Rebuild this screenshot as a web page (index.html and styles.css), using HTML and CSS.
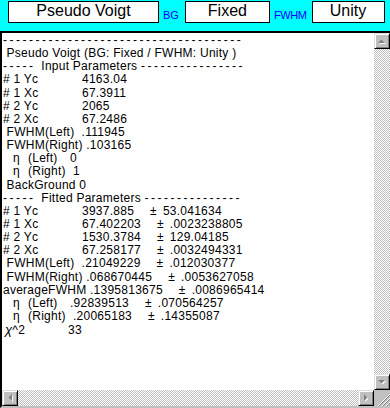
FILE: index.html
```html
<!DOCTYPE html>
<html lang="en">
<head>
  <meta charset="UTF-8">
  <title>Pseudo Voigt fit</title>
  <link rel="stylesheet" href="styles.css">
</head>
<body>
  <div class="toolbar">
    <div class="box box-model">Pseudo Voigt</div>
    <span class="tag tag-bg">BG</span>
    <div class="box box-bg">Fixed</div>
    <span class="tag tag-fwhm">FWHM</span>
    <div class="box box-fwhm">Unity</div>
  </div>
  <div class="editor">
    <div class="log">
      <div class="ln"><span class="dash">-------------------------------------</span></div>
      <div class="ln"> Pseudo Voigt (BG: Fixed / FWHM: Unity )</div>
      <div class="ln"><span class="dash">----- </span>Input Parameters <span class="dash">----------------</span></div>
      <div class="ln"><span class="k"># 1 Yc</span>4163.04</div>
      <div class="ln"><span class="k"># 1 Xc</span>67.3911</div>
      <div class="ln"><span class="k"># 2 Yc</span>2065</div>
      <div class="ln"><span class="k"># 2 Xc</span>67.2486</div>
      <div class="ln"> FWHM(Left)  .111945</div>
      <div class="ln"> FWHM(Right) .103165</div>
      <div class="ln"><span class="eta">η</span><span class="lbl-l">(Left)</span>0</div>
      <div class="ln"><span class="eta">η</span><span class="lbl-r">(Right)</span>1</div>
      <div class="ln"> BackGround 0</div>
      <div class="ln"><span class="dash">----- </span>Fitted Parameters <span class="dash">---------------</span></div>
      <div class="ln"><span class="k"># 1 Yc</span>3937.885<span class="pm">±</span>53.041634</div>
      <div class="ln"><span class="k"># 1 Xc</span>67.402203<span class="pm">±</span>.0023238805</div>
      <div class="ln"><span class="k"># 2 Yc</span>1530.3784<span class="pm">±</span>129.04185</div>
      <div class="ln"><span class="k"># 2 Xc</span>67.258177<span class="pm">±</span>.0032494331</div>
      <div class="ln"> FWHM(Left)  .21049229<span class="pm">±</span>.012030377</div>
      <div class="ln"> FWHM(Right) .068670445<span class="pm">±</span>.0053627058</div>
      <div class="ln">averageFWHM .1395813675<span class="pm">±</span>.0086965414</div>
      <div class="ln"><span class="eta">η</span><span class="lbl-l">(Left)</span>.92839513<span class="pm">±</span>.070564257</div>
      <div class="ln"><span class="eta">η</span><span class="lbl-r">(Right)</span>.20065183<span class="pm">±</span>.14355087</div>
      <div class="ln"><span class="k2"><span class="chi">χ</span>^2</span>33</div>
    </div>
    <div class="vscroll">
      <div class="sbtn">
        <svg width="9" height="7" viewBox="0 0 9 7"><polygon points="1,6 8,6 4.5,2.5" fill="#fff"/><polygon points="0,5 7,5 3.5,1.5" fill="#808080"/></svg>
      </div>
      <div class="track"></div>
      <div class="sbtn">
        <svg width="9" height="7" viewBox="0 0 9 7"><polygon points="1,2 8,2 4.5,5.5" fill="#fff"/><polygon points="0,1 7,1 3.5,4.5" fill="#808080"/></svg>
      </div>
    </div>
    <div class="hscroll">
      <div class="sbtn">
        <svg width="7" height="9" viewBox="0 0 7 9"><polygon points="6,1 6,8 2.5,4.5" fill="#fff"/><polygon points="5,0 5,7 1.5,3.5" fill="#808080"/></svg>
      </div>
      <div class="track"></div>
      <div class="sbtn">
        <svg width="7" height="9" viewBox="0 0 7 9"><polygon points="2,1 2,8 5.5,4.5" fill="#fff"/><polygon points="1,0 1,7 4.5,3.5" fill="#808080"/></svg>
      </div>
    </div>
    <div class="grip">
      <svg width="16" height="16" viewBox="0 0 16 16">
        <line x1="4" y1="16" x2="16" y2="4" stroke="#fff"/>
        <line x1="5" y1="16" x2="16" y2="5" stroke="#808080"/>
        <line x1="8" y1="16" x2="16" y2="8" stroke="#fff"/>
        <line x1="9" y1="16" x2="16" y2="9" stroke="#808080"/>
        <line x1="12" y1="16" x2="16" y2="12" stroke="#fff"/>
        <line x1="13" y1="16" x2="16" y2="13" stroke="#808080"/>
      </svg>
    </div>
  </div>
</body>
</html>
```

FILE: styles.css
```css
* { box-sizing: border-box; }
body { margin: 0; width: 390px; height: 408px; overflow: hidden; background: #00ffff; font-family: "Liberation Sans", Arial, sans-serif; color: #000; }

.toolbar { height: 31px; display: flex; align-items: flex-start; padding: 1px 0 0 8px; }
.box { height: 22px; border: 1px solid #000; background: #fff; font-size: 16px; line-height: 18px; text-align: center; }
.box-model { width: 151px; }
.box-bg { width: 85px; margin-left: 6px; }
.box-fwhm { width: 73px; margin-left: 5px; }
.tag { font-size: 11px; line-height: 12px; color: #0000ff; margin-top: 8px; }
.tag-bg { margin-left: 4px; }
.tag-fwhm { margin-left: 4px; letter-spacing: -0.4px; }

.editor { height: 377px; border-top: 2px solid #000; border-left: 2px solid #000; border-bottom: 2px solid #c0c0c0; background: #fff; display: grid; grid-template-columns: 1fr 16px; grid-template-rows: 1fr 16px; }
.log { padding: 1px 0 0 1px; font-size: 12px; line-height: 13.15px; letter-spacing: 0.25px; overflow: hidden; }
.ln { white-space: pre; height: 13.15px; }
.dash { letter-spacing: 2.5px; }
.k { display: inline-block; width: 79px; }
.k2 { display: inline-block; width: 65px; padding-left: 2px; }
.chi { font-style: italic; font-size: 13px; }
.eta { display: inline-block; width: 25px; padding-left: 10px; }
.lbl-l { display: inline-block; width: 42px; }
.lbl-r { display: inline-block; width: 45px; }
.pm { margin: 0 6px 0 16px; }

.vscroll { display: flex; flex-direction: column; }
.hscroll { display: flex; }
.track { flex: 1; background-image: repeating-conic-gradient(#c0c0c0 0 25%, #fff 0 50%); background-size: 2px 2px; }
.sbtn { width: 16px; height: 16px; flex: none; background: #c0c0c0; border: 1px solid; border-color: #dfdfdf #000 #000 #dfdfdf; box-shadow: inset 1px 1px #fff, inset -1px -1px #808080; display: flex; align-items: center; justify-content: center; }
.sbtn svg { display: block; }
.grip { background: #c0c0c0; }
.grip svg { display: block; }
```
